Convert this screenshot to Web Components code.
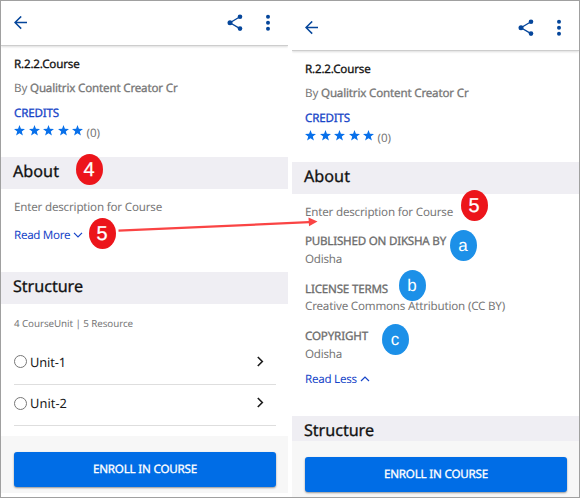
<!DOCTYPE html>
<html lang="en"><head><meta charset="utf-8"><title>Course details</title>
<style>html,body{margin:0;background:#fff}body{width:580px;height:498px;overflow:hidden;font-family:"Noto Sans","Open Sans",sans-serif;text-rendering:geometricPrecision}</style></head>
<body>
<guide-board>
  <course-screen slot="left" kind="short"></course-screen>
  <course-screen slot="right" kind="full"></course-screen>
  <step-badge slot="over" style="left:75.5px;top:153.5px">4</step-badge>
  <step-badge slot="over" style="left:88.5px;top:217.5px">5</step-badge>
  <step-badge slot="over" style="left:460.5px;top:189.5px">5</step-badge>
  <step-badge slot="over" kind="sub" style="left:449.5px;top:229.5px">a</step-badge>
  <step-badge slot="over" kind="sub" style="left:398.5px;top:269.5px">b</step-badge>
  <step-badge slot="over" kind="sub" style="left:381.5px;top:323.5px">c</step-badge>
</guide-board>
<script>
function define(name, html, ready) {
  customElements.define(name, class extends HTMLElement {
    connectedCallback() {
      if (this.shadowRoot) return;
      this.attachShadow({mode: 'open'}).innerHTML = typeof html === 'function' ? html(this) : html;
      if (ready) ready(this);
    }
  });
}

/* Text run whose tracking is adjusted to a set width (w), at a font size (s). */
define('fit-text', el => `<style>:host{display:inline-block;white-space:pre;flex:none;font-size:${el.getAttribute('s') || 11.6}px}
  :host([bold]){-webkit-text-stroke:.3px currentColor}
  span{display:inline-block}</style><span><slot></slot></span>`, el => {
  const span = el.shadowRoot.querySelector('span');
  const w = +el.getAttribute('w'), n = el.textContent.length;
  const gap = (w - span.getBoundingClientRect().width) / n;
  span.style.letterSpacing = gap.toFixed(3) + 'px';
});

define('text-row', el => `<style>:host{display:flex;box-sizing:border-box;height:16px;padding-top:2px;line-height:16px;padding-left:13px;align-items:center;color:#777;margin-top:${el.getAttribute('gap') || 0}px}
  :host([tone=dark]){color:#111}:host([tone=link]){color:#1745c8}:host([tone=head]){color:#6c6c6c}</style><slot></slot>`);

define('star-rating', `<style>:host{display:flex;gap:3.6px;margin-top:-5px;width:72.5px}svg{width:11px;height:11px;fill:#0870ea;flex:none}</style>` +
  '<svg viewBox="0 0 24 24"><path d="M12 0l3.1 8.4 8.9.4-7 5.4 2.4 8.6L12 17.9 4.6 22.8 7 14.2 0 8.8l8.9-.4z"/></svg>'.repeat(5));

define('chevron-icon', el => {
  const d = {down: 'M1 2.8L5 6.8L9 2.8', up: 'M1 7L5 3L9 7', right: 'M2.8 1L7.3 5.5L2.8 10'}[el.getAttribute('dir')];
  return `<style>:host{display:block;flex:none;height:11px}:host([dir=down]),:host([dir=up]){margin-top:-2px}svg{display:block;width:10px;height:11px;fill:none;stroke:currentColor;stroke-width:${el.getAttribute('dir') === 'right' ? 1.6 : 1.2}}</style><svg viewBox="0 0 10 11"><path d="${d}"/></svg>`;
});

define('section-band', `<style>:host{display:flex;align-items:center;box-sizing:border-box;height:32px;padding:0 0 5px 12px;background:#efeef3;color:#111;flex:none}</style><slot></slot>`);

define('app-header', `<style>:host{display:flex;align-items:center;box-sizing:border-box;height:var(--head);padding:var(--head-pad) 18px 1px 13px;border-bottom:1px solid #cdcdcd;box-shadow:0 1px 2px #0002;color:#05469b;flex:none}
  svg{display:block}.share{margin-left:auto;margin-right:23px}</style>
  <svg width="13" height="14" viewBox="0 0 13 14" fill="none" stroke="currentColor" stroke-width="1.5"><path d="M13 6.5H1M7.2 .4L1 6.5L7.2 12.6"/></svg>
  <svg class="share" width="16" height="18" viewBox="0 0 16 18" fill="currentColor" stroke="currentColor"><path fill="none" stroke-width="1.3" d="M13 2.8L3 8.8L13 14.6"/><g stroke="none"><circle cx="13" cy="2.8" r="2.3"/><circle cx="3" cy="8.8" r="2.5"/><circle cx="13" cy="14.6" r="2.3"/></g></svg>
  <svg width="4" height="18" viewBox="0 0 4 18" fill="currentColor"><circle cx="2" cy="2.8" r="2"/><circle cx="2" cy="8.8" r="2"/><circle cx="2" cy="14.8" r="2"/></svg>`);

define('unit-row', el => `<style>:host{display:flex;align-items:center;box-sizing:border-box;height:${el.getAttribute('h')}px;margin:0 12px 0 13px;padding:0 11px ${el.getAttribute('low')}px 0;border-bottom:1px solid #dedede;color:#1a1a1a;line-height:16px}
  i{width:11px;height:11px;border:1px solid #777;border-radius:50%;margin:-1px 3px 0 0}::slotted(fit-text){margin-top:-1px}chevron-icon{margin:-2px 0 0 auto}</style>
  <i></i><slot></slot><chevron-icon dir="right"></chevron-icon>`);

define('enroll-bar', `<style>:host{display:block;box-sizing:border-box;height:var(--foot);background:#f7f7f7;padding:16px 12px 0 13px;margin-top:auto;flex:none;position:relative}
  button{display:flex;justify-content:center;align-items:center;width:262px;height:35px;border:0;border-radius:3px;background:#006de6;color:#fff;font-family:inherit;text-rendering:inherit;padding:0 0 1px;box-shadow:0 1px 2px #0006}</style>
  <button><fit-text bold w="104">ENROLL IN COURSE</fit-text></button>`);

define('course-screen', el => {
  const full = el.getAttribute('kind') === 'full';
  return `<style>:host{display:flex;flex-direction:column;width:287px;height:492px;overflow:hidden;--head:45px;--head-pad:0px;--foot:57px}
  :host([kind=full]){height:496px;--head:50px;--head-pad:5px;--foot:56px}
  main{flex:1;min-height:0;overflow:hidden}section-band{margin-top:var(--g)}</style>
  <app-header></app-header><main>
  <text-row gap="10" tone="dark"><fit-text bold w="65.5">R.2.2.Course</fit-text></text-row>
  <text-row gap="8"><fit-text w="16">By </fit-text><fit-text bold w="147.5">Qualitrix Content Creator Cr</fit-text></text-row>
  <text-row gap="9" tone="link"><fit-text bold w="45">CREDITS</fit-text></text-row>
  <text-row gap="3"><star-rating></star-rating><fit-text w="13.5" style="margin-top:2px">(0)</fit-text></text-row>
  <section-band style="--g:17px"><fit-text bold w="46" s="16.2">About</fit-text></section-band>
  <text-row gap="10"><fit-text w="148">Enter description for Course</fit-text></text-row>` +
  (full ? `
  <text-row gap="13" tone="head"><fit-text bold w="141">PUBLISHED ON DIKSHA BY</fit-text></text-row>
  <text-row gap="2"><fit-text w="37">Odisha</fit-text></text-row>
  <text-row gap="14" tone="head"><fit-text bold w="83">LICENSE TERMS</fit-text></text-row>
  <text-row gap="1"><fit-text w="200">Creative Commons Attribution (CC BY)</fit-text></text-row>
  <text-row gap="14" tone="head"><fit-text bold w="63">COPYRIGHT</fit-text></text-row>
  <text-row gap="2"><fit-text w="37">Odisha</fit-text></text-row>
  <text-row gap="9" tone="link"><fit-text w="54.5">Read Less </fit-text><chevron-icon dir="up"></chevron-icon></text-row>
  <section-band style="--g:29px"><fit-text bold w="70" s="16.2">Structure</fit-text></section-band>` : `
  <text-row gap="12" tone="link"><fit-text w="59">Read More </fit-text><chevron-icon dir="down"></chevron-icon></text-row>
  <section-band style="--g:29px"><fit-text bold w="70" s="16.2">Structure</fit-text></section-band>
  <text-row gap="11"><fit-text w="119" s="9.8">4 CourseUnit | 5 Resource</fit-text></text-row>
  <unit-row h="45" low="0" style="margin-top:9px"><fit-text w="36" s="12.8">Unit-1</fit-text></unit-row>
  <unit-row h="41" low="3"><fit-text w="37" s="12.8">Unit-2</fit-text></unit-row>`) +
  `</main><enroll-bar></enroll-bar>`;
});

define('step-badge', `<style>:host{position:absolute;display:grid;place-items:center;width:27px;height:31px;border-radius:50%;background:#ec151b;color:#fff;font:20px/33px "Liberation Sans",Arial,sans-serif;-webkit-text-stroke:.25px #fff}
  :host([kind=sub]){background:#1c90e8;font-size:17px;line-height:32px;-webkit-text-stroke-width:0}</style><span><slot></slot></span>`);

define('guide-board', `<style>:host{display:flex;gap:4px;box-sizing:border-box;position:relative;width:580px;height:498px;border:1px solid #a0a0a0;overflow:hidden}
  .over{position:absolute;left:-1px;top:-1px;width:580px;height:498px}svg{position:absolute;inset:0}</style>
  <slot name="left"></slot><slot name="right"></slot>
  <div class="over"><svg width="580" height="498"><path d="M118.5 230.6L309 222.2" stroke="#fa4444" stroke-width="2.3"/><path d="M308.5 217.5L317.5 221.6L309 226.2z" fill="#fa4444"/></svg><slot name="over"></slot></div>`);
</script></body></html>
